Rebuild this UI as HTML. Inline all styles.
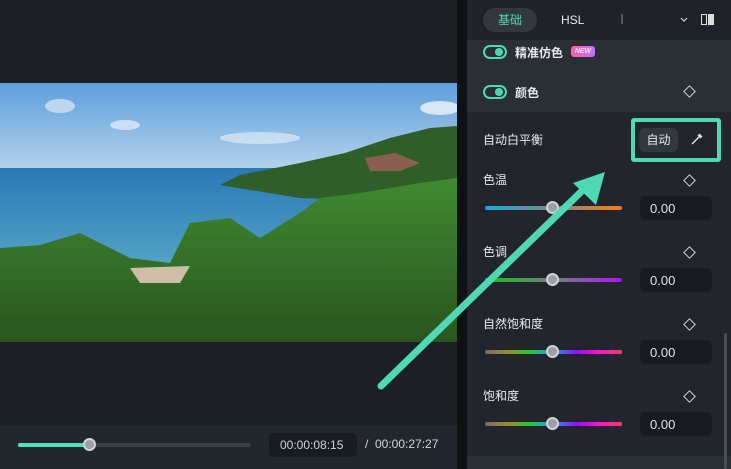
<!DOCTYPE html><html><head><meta charset="utf-8"><style>
*{margin:0;padding:0;box-sizing:border-box}
body{width:731px;height:469px;overflow:hidden;background:#1b1e22;font-family:"Liberation Sans","Noto Sans CJK SC",sans-serif;color:#e8e8e8;position:relative;font-size:12px}
.abs{position:absolute}
.sl{position:absolute;left:485px;width:137px;height:4px;border-radius:2px}
.th{position:absolute;width:13px;height:13px;border-radius:50%;background:#9aa0a6;border:2px solid #d0d3d6;left:546px}
.val{position:absolute;left:640px;width:72px;height:24px;background:#181b1f;border-radius:6px;font-size:13px;padding:5px 0 0 10px;color:#dfe3e8}
.dia{position:absolute;left:685px;width:9px;height:9px;border:1.5px solid #cfd2d6;transform:rotate(45deg)}
.lbl{position:absolute;left:483px;font-size:12px}
.tg{position:absolute;left:483px;width:24px;height:14px;border:2px solid #4fd8b4;border-radius:8px}
.tg:after{content:"";position:absolute;right:2px;top:1px;width:8px;height:8px;border-radius:50%;background:#4fd8b4}
</style></head><body>
<div class="abs" style="left:0;top:0;width:457px;height:425px;background:#1c1f23"></div>
<svg class="abs" style="left:0;top:83px" width="457" height="259">
<defs>
<linearGradient id="sky" x1="0" y1="0" x2="0" y2="1"><stop offset="0" stop-color="#5e9fdc"/><stop offset="1" stop-color="#b5d3ec"/></linearGradient>
<linearGradient id="sea" x1="0" y1="0" x2="0" y2="1"><stop offset="0" stop-color="#2a78b8"/><stop offset="0.5" stop-color="#4f9ec2"/><stop offset="1" stop-color="#9ad6da"/></linearGradient>
<linearGradient id="bush" x1="0" y1="0" x2="0" y2="1"><stop offset="0" stop-color="#3f8a30"/><stop offset="1" stop-color="#2a551f"/></linearGradient>
</defs>
<rect width="457" height="88" fill="url(#sky)"/>
<rect y="85" width="457" height="174" fill="url(#sea)"/>
<ellipse cx="60" cy="23" rx="15" ry="7" fill="#dce9f4" opacity=".7"/>
<ellipse cx="125" cy="42" rx="15" ry="5" fill="#e8f0f8" opacity=".7"/>
<ellipse cx="260" cy="55" rx="40" ry="6" fill="#e8f0f8" opacity=".6"/>
<ellipse cx="440" cy="25" rx="20" ry="7" fill="#eef4fa" opacity=".8"/>
<path d="M220 102 L240 92 L300 80 L345 70 L390 55 L430 45 L457 43 L457 120 L300 115 Z" fill="#2f5e28"/>
<path d="M365 75 L395 70 L420 80 L400 88 L370 88 Z" fill="#8a5f4f"/>
<path d="M0 165 L40 162 L80 150 L130 175 L170 180 L190 140 L230 135 L260 155 L300 130 L320 115 L360 110 L420 100 L457 95 L457 259 L0 259 Z" fill="url(#bush)"/>
<path d="M130 185 L190 183 L180 200 L140 200 Z" fill="#cdbfa6"/>
</svg>
<div class="abs" style="left:0;top:425px;width:457px;height:44px;background:#22272e"></div>
<div class="abs" style="left:18px;top:443px;width:233px;height:4px;background:#3a3f47;border-radius:2px"></div>
<div class="abs" style="left:18px;top:443px;width:72px;height:4px;background:#4fe0c0;border-radius:2px"></div>
<div class="abs" style="left:83px;top:438px;width:13px;height:13px;border-radius:50%;background:#9aa0a6;border:2px solid #d0d3d6"></div>
<div class="abs" style="left:269px;top:433px;width:88px;height:24px;background:#181b1f;border-radius:5px;font-size:12px;color:#cfd4da;padding:5px 0 0 11px">00:00:08:15</div>
<div class="abs" style="left:365px;top:437px;font-size:12px;color:#cfd4da">/&nbsp;&nbsp;00:00:27:27</div>
<div class="abs" style="left:457px;top:0;width:10px;height:469px;background:#0f1113"></div>
<div class="abs" style="left:467px;top:0;width:264px;height:469px;background:#22262c"></div>
<div class="abs" style="left:467px;top:0;width:264px;height:40px;background:#1f2329"></div>
<div class="abs" style="left:483px;top:8px;width:54px;height:24px;border-radius:12px;background:#33383f;color:#4fd8b4;font-size:12px;text-align:center;line-height:24px">基础</div>
<div class="abs" style="left:561px;top:13px;font-size:12px">HSL</div>
<div class="abs" style="left:621px;top:14px;width:2px;height:10px;background:#555"></div>
<svg class="abs" style="left:680px;top:17px" width="8" height="6"><path d="M1 1 L4 4 L7 1" stroke="#ccc" stroke-width="1.2" fill="none"/></svg>
<div class="abs" style="left:701px;top:14px;width:6px;height:11px;border:1.5px solid #ddd"></div>
<div class="abs" style="left:708px;top:14px;width:6px;height:11px;background:#ddd"></div>
<div class="abs" style="left:467px;top:40px;width:264px;height:72px;background:#2a2f36"></div>
<div class="tg" style="top:45px"></div>
<div class="abs" style="left:515px;top:44px;font-size:12px;font-weight:bold">精准仿色</div>
<div class="abs" style="left:571px;top:46px;width:24px;height:11px;border-radius:3px;background:linear-gradient(90deg,#ff5fa8,#c66cff);font-size:7px;font-weight:bold;font-style:italic;text-align:center;line-height:11px">NEW</div>
<div class="tg" style="top:85px"></div>
<div class="abs" style="left:515px;top:84px;font-size:12px;font-weight:bold">颜色</div>
<div class="dia" style="top:87px"></div>
<div class="lbl" style="top:131px">自动白平衡</div>
<div class="abs" style="left:631px;top:118px;width:90px;height:44px;border:4px solid #4fd8b4;border-radius:3px"></div>
<div class="abs" style="left:639px;top:128px;width:39px;height:24px;background:#33383f;border-radius:6px;text-align:center;line-height:24px;font-size:12px">自动</div>
<svg class="abs" style="left:690px;top:132px" width="14" height="14"><path d="M2 12 L9 5 M8 3 L11 6 M9 2 L12 5" stroke="#ddd" stroke-width="1.5" fill="none"/></svg>
<div class="lbl" style="top:171px">色温</div><div class="dia" style="top:176px"></div>
<div class="sl" style="top:206px;background:linear-gradient(90deg,#1aa9e6,#7a8a80,#ff7a10)"></div><div class="th" style="top:201px"></div>
<div class="val" style="top:196px">0.00</div>
<div class="lbl" style="top:243px">色调</div><div class="dia" style="top:248px"></div>
<div class="sl" style="top:278px;background:linear-gradient(90deg,#12c51e,#708080,#b013ff)"></div><div class="th" style="top:273px"></div>
<div class="val" style="top:268px">0.00</div>
<div class="lbl" style="top:315px">自然饱和度</div><div class="dia" style="top:320px"></div>
<div class="sl" style="top:350px;background:linear-gradient(90deg,#7a6a6a,#9a8a30,#20d030,#3090ff,#9010ff,#ff10d0,#ff4060)"></div><div class="th" style="top:345px"></div>
<div class="val" style="top:340px">0.00</div>
<div class="lbl" style="top:387px">饱和度</div><div class="dia" style="top:392px"></div>
<div class="sl" style="top:422px;background:linear-gradient(90deg,#7a6a6a,#9a8a30,#20d030,#3090ff,#9010ff,#ff10d0,#ff4060)"></div><div class="th" style="top:417px"></div>
<div class="val" style="top:412px">0.00</div>
<div class="abs" style="left:467px;top:456px;width:264px;height:13px;background:#2a2f36"></div>
<div class="abs" style="left:724px;top:333px;width:3px;height:136px;background:#4a4f56;border-radius:2px"></div>
<svg class="abs" style="left:0;top:0" width="731" height="469"><line x1="381" y1="386" x2="585" y2="188" stroke="#4fd8b4" stroke-width="7" stroke-linecap="round"/><polygon points="605,172 573,183 596,205" fill="#4fd8b4"/></svg>
</body></html>
